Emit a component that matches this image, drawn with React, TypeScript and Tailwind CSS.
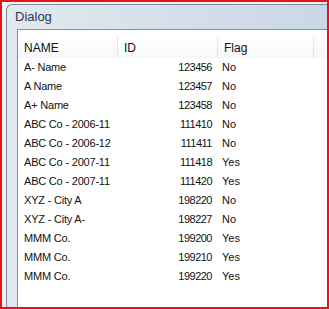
import React from 'react';

const rows: [string, string, string][] = [
  ['A- Name', '123456', 'No'],
  ['A Name', '123457', 'No'],
  ['A+ Name', '123458', 'No'],
  ['ABC Co - 2006-11', '111410', 'No'],
  ['ABC Co - 2006-12', '111411', 'No'],
  ['ABC Co - 2007-11', '111418', 'Yes'],
  ['ABC Co - 2007-11', '111420', 'Yes'],
  ['XYZ - City A', '198220', 'No'],
  ['XYZ - City A-', '198227', 'No'],
  ['MMM Co.', '199200', 'Yes'],
  ['MMM Co.', '199210', 'Yes'],
  ['MMM Co.', '199220', 'Yes'],
];

export default function App() {
  return (
    <div
      className="w-[329px] h-[309px] border-2 border-[#e5141b] bg-[#f3f3f3] pt-[2px] pl-[4px] overflow-hidden flex flex-col"
      style={{ fontFamily: '"Liberation Sans", Arial, sans-serif' }}
    >
      {/* window frame */}
      <div className="flex-1 flex flex-col border-l border-t border-[#7d8a99] rounded-tl-[6px] bg-gradient-to-r from-[#e2e8ef] to-[#c9d7e7] min-h-0">
        <div className="h-[24px] flex items-center pl-[8px] text-[13px] text-[#2b3a4c]">Dialog</div>
        <div className="flex-1 ml-[10px] border-l border-t border-[#8a9099] bg-white pt-[7px] min-h-0 text-[11px] text-[#111] whitespace-nowrap">
          {/* header */}
          <div className="h-[21px] flex items-center bg-gradient-to-b from-white to-[#f6f7f9] w-[400px] text-[12px]">
            <div className="w-[100px] pl-[6px] h-full flex items-center border-r border-[#e2e4e8]">NAME</div>
            <div className="w-[100px] pl-[6px] h-full flex items-center border-r border-[#e2e4e8]">ID</div>
            <div className="w-[96px] pl-[6px] h-full flex items-center border-r border-[#e2e4e8]">Flag</div>
          </div>
          {rows.map((r, i) => (
            <div key={i} className="h-[19px] flex items-center">
              <div className="w-[100px] pl-[6px] tracking-[-0.2px]">{r[0]}</div>
              <div className="w-[100px] text-right pr-[6px] tracking-[-0.5px]">{r[1]}</div>
              <div className="w-[96px] pl-[4px]">{r[2]}</div>
            </div>
          ))}
        </div>
      </div>
    </div>
  );
}
